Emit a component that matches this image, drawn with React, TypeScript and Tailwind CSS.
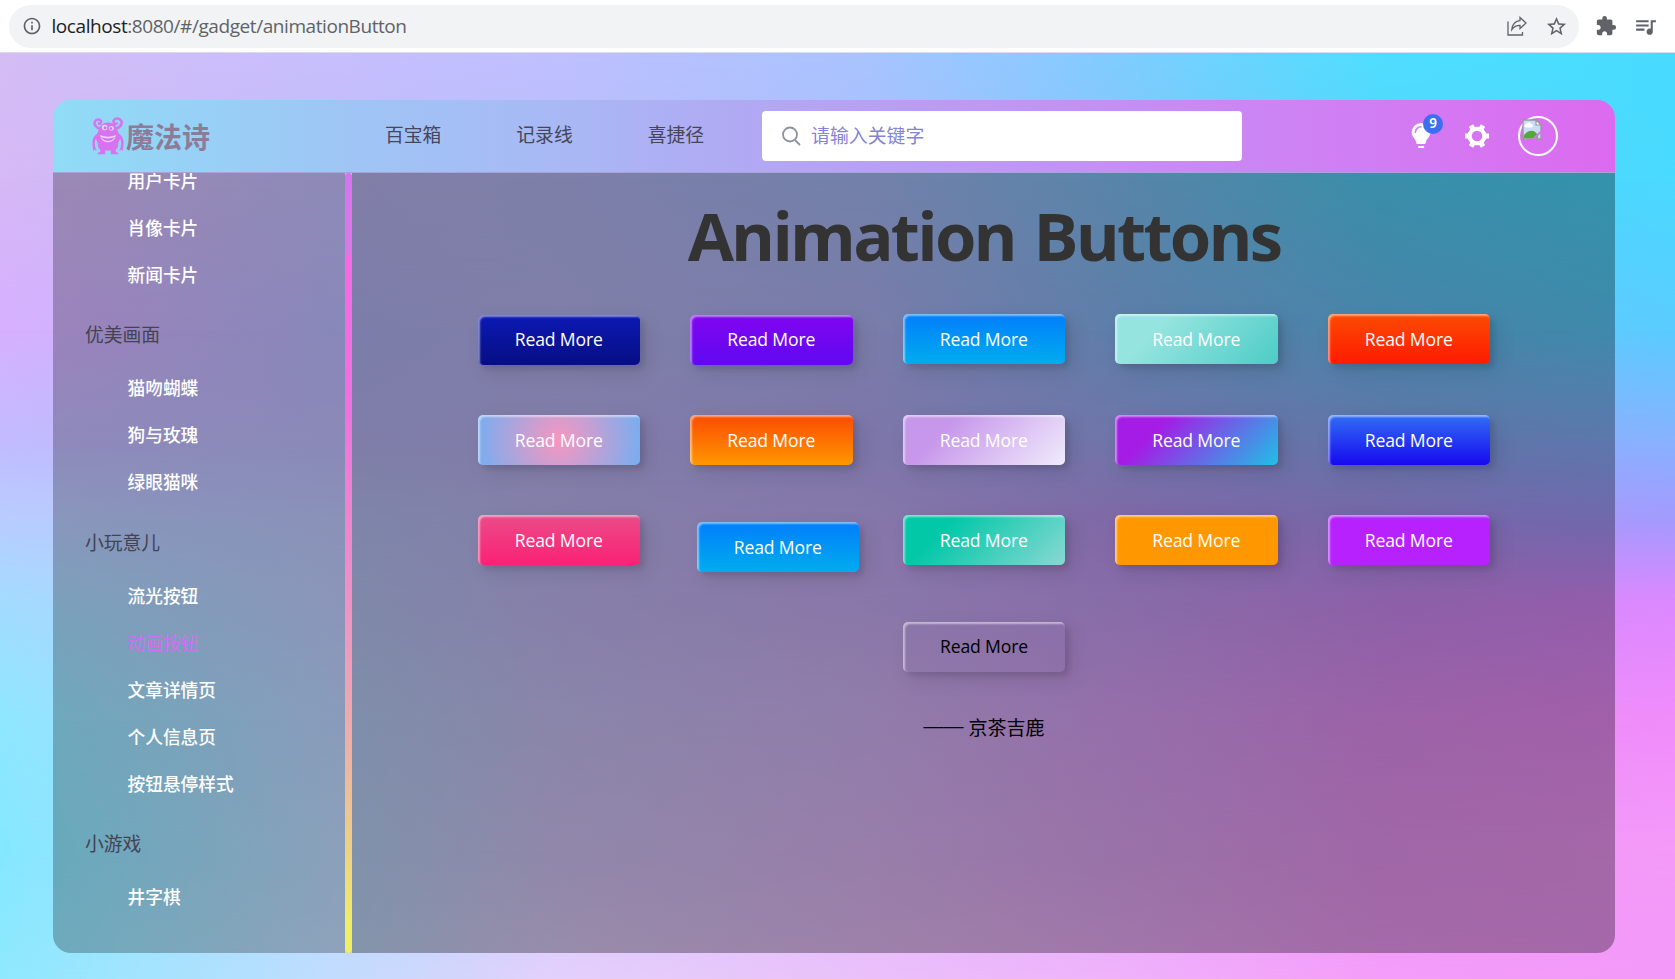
import React from "react";
import { MdExtension, MdInfoOutline, MdQueueMusic, MdStarBorder } from "react-icons/md";

const columns = [0, 340, 560, 870, 1115, 1380, 1675];

const mesh: { y: number; colors: string[] }[] = [
  { y: 0, colors: ["#d4bdf5", "#c7bffe", "#bfc0ff", "#a8c4ff", "#80cdff", "#4fdffe", "#48dcff"] },
  { y: 127, colors: ["#d6b8f6", "#bfbbf8", "#b9bcfa", "#a9befb", "#84c4fa", "#55d2fa", "#4adaff"] },
  { y: 277, colors: ["#d7b0ff", "#b8b8fb", "#bcbbf9", "#b4b7fb", "#8abafa", "#6cc4fa", "#5accff"] },
  { y: 387, colors: ["#c2bbff", "#bbb9f8", "#bfb8fb", "#b8affa", "#a5adfa", "#90acf8", "#88b2ff"] },
  { y: 467, colors: ["#b8cdff", "#bac5fa", "#c3bcfa", "#c5b0fa", "#bc9af6", "#b098f8", "#a49aff"] },
  { y: 547, colors: ["#a3dbff", "#bccafa", "#c6bcfa", "#cbb0fa", "#c8a0f8", "#cf8ef8", "#dc88ff"] },
  { y: 667, colors: ["#8ee7ff", "#bad2fb", "#ccc5fb", "#d6b8fb", "#dca4fb", "#e692f7", "#f18cfb"] },
  { y: 797, colors: ["#84e8ff", "#bcd8fc", "#d5c8fb", "#e0bafb", "#e2a9f9", "#ec98f6", "#f49af9"] },
  { y: 926, colors: ["#8ee9fe", "#c2dcfe", "#e3d0fc", "#eac0fa", "#efb2fb", "#f49df9", "#f299f9"] },
];

function MeshBackground() {
  return (
    <div className="absolute inset-0 grid">
      {mesh.map((row, i) => {
        const stops = row.colors.map((c, k) => `${c} ${columns[k]}px`).join(", ");
        const mask =
          i === 0
            ? undefined
            : `linear-gradient(180deg, transparent ${mesh[i - 1].y}px, black ${row.y}px)`;
        return (
          <div
            key={row.y}
            className="col-start-1 row-start-1"
            style={{ backgroundImage: `linear-gradient(90deg, ${stops})`, maskImage: mask }}
          />
        );
      })}
    </div>
  );
}

function ShareIcon() {
  return (
    <svg width="20" height="20" viewBox="0 0 20 20" fill="none" stroke="#5f6368" strokeWidth="1.3">
      <path d="M1 5.500V19h14.500v-3" />
      <path d="M13 1.500 19 7l-6 5.500V9.400C9.500 9.300 7 10.600 4.800 13.600 5.300 8.800 8.200 5 13 4.600Z" />
    </svg>
  );
}

function BrowserBar() {
  return (
    <div className="flex h-[53px] items-center border-b border-[#dcdaf0] bg-white pl-[9px]">
      <div className="flex h-[43px] w-[1570px] items-center rounded-full bg-[#f1f3f4] pr-[11px] pl-[12.5px]">
        <MdInfoOutline className="size-[20px] text-[#5f6368]" />
        <span className="ml-[10px] flex-1 font-['Open_Sans',sans-serif] text-[19px] leading-none tracking-[-0.43px] text-[#5f6368]">
          <span className="text-[#202124]">localhost</span>:8080/#/gadget/animationButton
        </span>
        <ShareIcon />
        <MdStarBorder className="ml-[18px] size-[23px] text-[#5f6368]" />
      </div>
      <MdExtension className="ml-[16px] size-[22px] text-[#5f6368]" />
      <MdQueueMusic className="ml-[16px] size-[25px] text-[#5f6368]" />
    </div>
  );
}

function MonsterLogo() {
  return (
    <svg width="32" height="38" viewBox="0 0 32 38">
      <g fill="none" stroke="#d873f0" strokeLinecap="round">
        <path d="M8.500 12C3.500 10.500 1.500 7 3 4.300 4.300 2 7.800 1.800 9 4c.7 1.800-.7 3.200-2.300 2.600" strokeWidth="2.400" />
        <path d="M23.500 12C29.500 10 31 5.500 28.500 2.800 26.300.600 22.600 1.200 21.600 3.800c-.6 2.200 1.200 3.800 3 2.800" strokeWidth="2.600" />
        <path d="M5.500 18C2 20.500.800 25 2.200 31M26.500 18c3.500 2.500 4.700 7 3.300 13" strokeWidth="2.500" />
        <path d="M2.200 30.500 1.500 33M2.400 30.500l1.600 2.300M29.800 30.500l.7 2.500M29.600 30.500 28 32.800" strokeWidth="1.300" />
      </g>
      <path
        fill="#d873f0"
        d="M16 5.500c-5 0-8.500 3.300-9.500 8-.5 2.500-2.500 3.700-2.700 6.500-.2 3.500 2.200 4.500 2 8-.1 2.200.7 3.500 2.400 4.400V35c-1.500.3-2.700 1-2.700 2.200h7.700V33.500h5.600v3.700h7.700c0-1.200-1.200-1.900-2.700-2.200v-2.600c1.700-.9 2.500-2.200 2.400-4.400-.2-3.500 2.200-4.500 2-8-.2-2.800-2.200-4-2.700-6.500-1-4.700-4.500-8-9.500-8Z"
      />
      <g fill="#e4dcfa">
        <circle cx="12.600" cy="10.500" r="2.700" />
        <circle cx="19.400" cy="11.300" r="2.400" />
      </g>
      <circle cx="13" cy="10.800" r="1.500" fill="#c86fe6" />
      <circle cx="19" cy="11.500" r="1.300" fill="#c86fe6" />
      <path d="M8.200 18c4.700 2.300 10.900 2.300 15.600 0-.8 4.900-3.800 7.200-7.800 7.200S9 22.900 8.200 18Z" fill="#e4dcfa" />
      <path d="M9.300 20c4.200 1.900 9.200 1.900 13.400 0-1.300 2.900-3.700 4-6.700 4s-5.400-1.100-6.700-4Z" fill="#d873f0" />
    </svg>
  );
}

function BulbIcon() {
  return (
    <svg width="20" height="26" viewBox="0 0 20 26">
      <path
        fill="#fff"
        d="M10 0a9.300 9.300 0 0 0-9.300 9.300c0 3.500 1.800 5.200 3.300 7.200.9 1.300 1 2.600 1.400 3.700.1.500.5.700 1 .7h7.200c.5 0 .9-.2 1-.7.4-1.100.5-2.400 1.400-3.700 1.500-2 3.300-3.700 3.300-7.200A9.300 9.300 0 0 0 10 0Z"
      />
      <path d="M4.400 9.300A5.600 5.600 0 0 1 10 3.700" fill="none" stroke="#cf7df3" strokeWidth="1.600" strokeLinecap="round" />
      <rect x="7" y="23" width="6.200" height="2" rx="0.800" fill="#fff" />
    </svg>
  );
}

function GearIcon() {
  return (
    <svg width="26" height="26" viewBox="-13 -13 26 26">
      <circle r="7.300" fill="none" stroke="#fff" strokeWidth="4" />
      {[0, 60, 120, 180, 240, 300].map((a) => (
        <path key={a} d="M7.500-4.800 9.300-2.500H12V2.500H9.300L7.500 4.800Z" fill="#fff" transform={`rotate(${a})`} />
      ))}
    </svg>
  );
}

function BrokenImageIcon() {
  return (
    <svg width="20" height="21" viewBox="0 0 20 21">
      <path d="M1 1h13l5 5v14H1Z" fill="#c9dcf8" stroke="#999999" strokeWidth="1.300" />
      <path d="M3.500 8.500a2 2 0 0 1 .8-3.700 2.800 2.800 0 0 1 5 0 2 2 0 0 1 .5 3.700Z" fill="#fff" />
      <path d="M1.700 19.300v-2.500C4 13.200 7 11.800 9.500 11.800c3 0 5 2 6.300 4.500v3Z" fill="#55a83a" />
      <path d="M14 1v5h5Z" fill="#fff" stroke="#999999" strokeWidth="1.200" />
      <path d="M11 20.500 19.500 12" stroke="#d876f2" strokeWidth="2" />
    </svg>
  );
}

function Header() {
  return (
    <header className="flex h-[73px] items-center border-b border-[#a8a4d8] bg-[linear-gradient(90deg,#90dcf7_0%,#9fc5f5_19%,#a9b8f5_33%,#b1a9f3_44%,#c58ff4_68%,#d27bf3_86%,#dc6af0_100%)]">
      <div className="ml-[39px] flex w-[293px] items-center">
        <MonsterLogo />
        <span className="ml-[2px] font-['Noto_Sans_CJK_SC',sans-serif] text-[28px] leading-none font-bold text-[#8d7c97]">
          魔法诗
        </span>
      </div>
      <nav className="flex w-[377px] gap-[75px] pb-[3px] font-['Noto_Sans_CJK_SC',sans-serif] text-[18.8px] leading-none text-[#46465a]">
        <span>百宝箱</span>
        <span>记录线</span>
        <span>喜捷径</span>
      </nav>
      <div className="flex h-[50px] w-[480px] items-center rounded-[4px] bg-white pl-[20px]">
        <svg width="19" height="20" viewBox="0 0 19 20" fill="none" stroke="#8b93a1" strokeWidth="1.800">
          <circle cx="8" cy="8.500" r="7" />
          <path d="m13 14 5 5" />
        </svg>
        <span className="ml-[10px] pb-[1px] font-['Noto_Sans_CJK_SC',sans-serif] text-[18.9px] leading-none text-[#8583d6]">
          请输入关键字
        </span>
      </div>
      <div className="relative ml-[169px] flex h-[26px] w-[20px]">
        <BulbIcon />
        <span className="absolute -top-[9px] left-[12px] flex size-[20px] items-center justify-center rounded-full bg-[#3b6ff0] font-['Noto_Sans',sans-serif] text-[13.5px] leading-none font-semibold text-white">
          9
        </span>
      </div>
      <div className="ml-[33px]">
        <GearIcon />
      </div>
      <div className="ml-[28px] size-[40px] rounded-full border-2 border-white pt-px pl-[2px]">
        <BrokenImageIcon />
      </div>
    </header>
  );
}

const menu: { title?: string; items: string[] }[] = [
  { items: ["用户卡片", "肖像卡片", "新闻卡片"] },
  { title: "优美画面", items: ["猫吻蝴蝶", "狗与玫瑰", "绿眼猫咪"] },
  { title: "小玩意儿", items: ["流光按钮", "动画按钮", "文章详情页", "个人信息页", "按钮悬停样式"] },
  { title: "小游戏", items: ["井字棋"] },
];

function Sidebar() {
  return (
    <aside className="flex w-[299px] overflow-hidden font-['Noto_Sans_CJK_SC',sans-serif]">
      <div className="w-[292px] overflow-hidden bg-[rgba(0,0,0,0.26)]">
        <div className="-mt-[16px]">
          {menu.map((group) => (
            <div key={group.items[0]}>
              {group.title && (
                <div className="flex h-[66.5px] items-center pt-[7px] pl-[32px] text-[18.8px] leading-none text-[#434353]">
                  {group.title}
                </div>
              )}
              {group.items.map((item) => (
                <div
                  key={item}
                  className={`flex h-[47px] items-center pl-[74.5px] text-[17.7px] leading-none ${
                    item === "动画按钮" ? "text-[#d36ef0]" : "font-medium text-white"
                  }`}
                >
                  {item}
                </div>
              ))}
            </div>
          ))}
        </div>
      </div>
      <div className="flex w-[7px] flex-col overflow-hidden rounded-full bg-[linear-gradient(180deg,#d873f0_0px,#da7ae4_84px)]">
        <div className="mt-[81px] flex-1 rounded-t-full bg-[linear-gradient(180deg,#f46ae4_0%,#ee70df_20%,#ee9bbd_57%,#eeb1a5_71%,#eed085_85%,#f0ee66_96%)]" />
      </div>
    </aside>
  );
}

const buttons = [
  "mt-[26px] mb-[24px] bg-[linear-gradient(0deg,#060e83,#0c19b4)]",
  "mt-[26px] mb-[24px] bg-[linear-gradient(0deg,#6009f0,#8105f0)]",
  "my-[25px] pt-[2px] bg-[linear-gradient(0deg,#00acee,#027efb)]",
  "my-[25px] pt-[2px] bg-[linear-gradient(315deg,#4dccc6_0%,#96e4df_74%)]",
  "my-[25px] pt-[2px] bg-[linear-gradient(0deg,#ff1b00,#fb4b02)]",
  "mt-[26px] mb-[24px] pt-[2px] bg-[radial-gradient(circle,#f796c0_0%,#76aef1_100%)]",
  "mt-[26px] mb-[24px] pt-[2px] bg-[linear-gradient(0deg,#ff9700,#fb4b02)]",
  "mt-[26px] mb-[24px] pt-[2px] bg-[linear-gradient(315deg,#f0ecfc_0%,#c797eb_74%)]",
  "mt-[26px] mb-[24px] pt-[2px] bg-[linear-gradient(315deg,#1fc0e6_0%,#a41ce6_74%)]",
  "mt-[26px] mb-[24px] pt-[2px] bg-[linear-gradient(0deg,#1609f0,#316ef4)]",
  "mt-[26px] mb-[24px] pt-[2px] bg-[linear-gradient(0deg,#fb2175,#ea4c89)]",
  "relative top-[7px] left-[6.5px] mt-[26px] mb-[24px] pt-[2px] bg-[linear-gradient(0deg,#00acee,#027efb)]",
  "mt-[26px] mb-[24px] pt-[2px] bg-[linear-gradient(315deg,#89d8d3_0%,#03c8a8_74%)]",
  "mt-[26px] mb-[24px] pt-[2px] bg-[#ff9700]",
  "mt-[26px] mb-[24px] pt-[2px] bg-[#b621fe]",
];

const buttonBase =
  "mx-[25px] flex h-[50px] w-[162.5px] items-center justify-center rounded-[5px] font-['Open_Sans',sans-serif] text-[17.6px] leading-none tracking-[-0.15px] shadow-[inset_2px_2px_2px_0px_rgba(255,255,255,0.5),7px_7px_20px_0px_rgba(0,0,0,0.1),4px_4px_5px_0px_rgba(0,0,0,0.1)]";

function Content() {
  return (
    <main className="flex flex-1 flex-col items-center bg-[rgba(0,0,0,0.32)] pl-px">
      <h1 className="mt-[18px] h-[98px] font-['Open_Sans',sans-serif] text-[67px] leading-[88px] font-bold tracking-[-2.75px] whitespace-nowrap text-[#333333] [word-spacing:4px]">
        Animation Buttons
      </h1>
      <div className="flex w-[1063px] flex-wrap">
        {buttons.map((look, i) => (
          <button key={i} className={`${buttonBase} font-medium text-white ${look}`}>
            Read More
          </button>
        ))}
      </div>
      <button className={`${buttonBase} mt-[33px] text-black`}>Read More</button>
      <p className="mt-[44px] flex items-center font-['Noto_Sans_CJK_SC',sans-serif] text-[19px] leading-none text-black">
        <span className="mr-[5px] font-['Liberation_Sans',sans-serif] text-[20px]">——</span>
        <span>京茶吉鹿</span>
      </p>
    </main>
  );
}

export default function App() {
  return (
    <div className="flex h-[979px] w-[1675px] flex-col overflow-hidden">
      <BrowserBar />
      <div className="relative flex-1 pt-[47px] pl-[53px]">
        <MeshBackground />
        <div className="relative flex h-[853px] w-[1562px] flex-col overflow-hidden rounded-[18px]">
          <Header />
          <div className="flex min-h-0 flex-1">
            <Sidebar />
            <Content />
          </div>
        </div>
      </div>
    </div>
  );
}
